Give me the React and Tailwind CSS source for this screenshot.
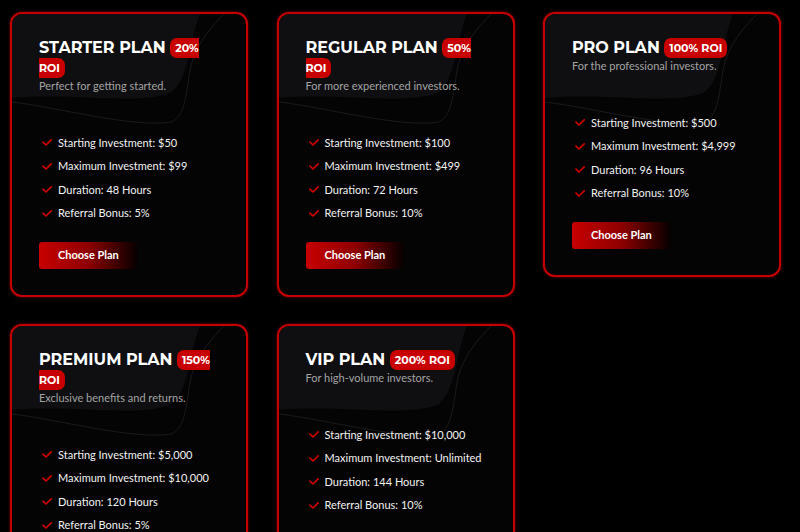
const plans = [
  {
    name: 'STARTER PLAN',
    roi: '20% ROI',
    tagline: 'Perfect for getting started.',
    features: ['Starting Investment: $50', 'Maximum Investment: $99', 'Duration: 48 Hours', 'Referral Bonus: 5%'],
  },
  {
    name: 'REGULAR PLAN',
    roi: '50% ROI',
    tagline: 'For more experienced investors.',
    features: ['Starting Investment: $100', 'Maximum Investment: $499', 'Duration: 72 Hours', 'Referral Bonus: 10%'],
  },
  {
    name: 'PRO PLAN',
    roi: '100% ROI',
    tagline: 'For the professional investors.',
    features: ['Starting Investment: $500', 'Maximum Investment: $4,999', 'Duration: 96 Hours', 'Referral Bonus: 10%'],
  },
  {
    name: 'PREMIUM PLAN',
    roi: '150% ROI',
    tagline: 'Exclusive benefits and returns.',
    features: ['Starting Investment: $5,000', 'Maximum Investment: $10,000', 'Duration: 120 Hours', 'Referral Bonus: 5%'],
  },
  {
    name: 'VIP PLAN',
    roi: '200% ROI',
    tagline: 'For high-volume investors.',
    features: ['Starting Investment: $10,000', 'Maximum Investment: Unlimited', 'Duration: 144 Hours', 'Referral Bonus: 10%'],
  },
];

function CheckIcon() {
  return (
    <svg viewBox="0 0 10 7" className="w-[10px] h-[7px] shrink-0" fill="none">
      <path d="M1 3.2 L4 6 L9.2 0.8" stroke="#d00000" strokeWidth="1.7" strokeLinecap="round" strokeLinejoin="round" />
    </svg>
  );
}

// decorative swoosh behind the card content
function CardPattern() {
  return (
    <svg className="absolute left-0 top-0 w-[238px] h-[160px] pointer-events-none" viewBox="0 0 238 160" fill="none">
      <path d="M0 0 H188 C176 30 178 62 160 78 C130 92 60 78 0 84 Z" fill="#0f0f11" />
      <path d="M0 88 C50 94 120 114 160 108 C176 100 174 70 180 48 C186 28 200 12 212 0" stroke="#1b1b1d" strokeWidth="1" />
    </svg>
  );
}

function PlanCard({ plan }) {
  return (
    <div className="relative overflow-hidden rounded-[12px] border-2 border-[#c40000] bg-[#040404] px-[27px] pt-[24px] pb-[26px] shadow-[0_0_3px_rgba(210,0,0,0.6)]">
      <CardPattern />
      <div className="relative">
        <h3 className="text-[16px] leading-[20px] font-bold text-white font-['Montserrat','Open_Sans',sans-serif]">
          {plan.name}{' '}
          <span className="bg-[#c80000] text-[11px] leading-[13px] px-[5px] py-[3px] rounded-[7px] [box-decoration-break:slice] align-[1px]">
            {plan.roi}
          </span>
        </h3>
        <p className="text-[11px] leading-[16px] text-[#a3a3a3] font-['Lato',sans-serif]">{plan.tagline}</p>
        <ul className="mt-[37px] font-['Lato',sans-serif]">
          {plan.features.map((f) => (
            <li key={f} className="flex items-center gap-[6px] pl-[3px] h-[23.5px] text-[11px] text-[#f2f2f2]">
              <CheckIcon />
              <span>{f}</span>
            </li>
          ))}
        </ul>
        <button className="mt-[17px] h-[27px] px-[19px] rounded-[3px] text-[11px] font-bold text-white font-['Lato',sans-serif] bg-[linear-gradient(90deg,#c80000_0%,#8e0000_50%,#050000_100%)]">
          Choose Plan
        </button>
      </div>
    </div>
  );
}

export default function App() {
  return (
    <div className="min-h-screen bg-black pt-[12px] pl-[10px]">
      <div className="grid grid-cols-[238px_238px_238px] gap-x-[28.5px] gap-y-[27px] items-start">
        {plans.map((p) => (
          <PlanCard key={p.name} plan={p} />
        ))}
      </div>
    </div>
  );
}
